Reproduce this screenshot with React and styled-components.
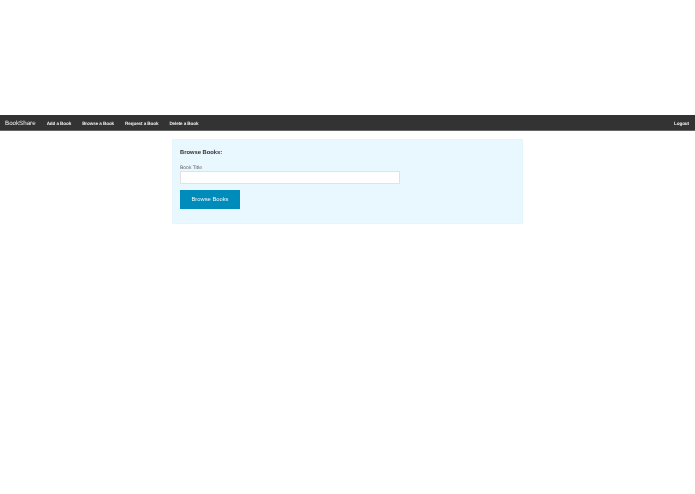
import React from 'react'
import styled, { createGlobalStyle } from 'styled-components'

const GlobalStyle = createGlobalStyle`
  html, body {
    margin: 0;
    padding: 0;
    background: #fff;
    font-family: "Liberation Sans", Arial, sans-serif;
    text-rendering: geometricPrecision;
  }
`

const Page = styled.div`
  min-height: 494px;
  padding-top: 115px;
  box-sizing: border-box;
  filter: blur(0.35px);
`

const TopBar = styled.nav`
  height: 14px;
  background: #333;
  border-bottom: 1px solid #666;
  display: flex;
  align-items: center;
  justify-content: space-between;
  padding: 1px 6px 0 5px;
`

const NavLeft = styled.div`
  display: flex;
  align-items: center;
`

const Brand = styled.a`
  color: #f2f2f2;
  font-size: 6.2px;
  margin-right: 11px;
  white-space: nowrap;
`

const NavLink = styled.a`
  color: #eee;
  font-size: 4.6px;
  font-weight: 700;
  letter-spacing: -0.1px;
  margin-right: ${(p) => (p.$last ? 0 : '11px')};
  white-space: nowrap;
`

const Panel = styled.section`
  width: 351px;
  height: 85px;
  box-sizing: border-box;
  margin: 8px auto 0;
  padding: 9px 7px 0;
  background: #e9f7fe;
  border: 1px solid #e6f4fb;
`

const Heading = styled.h4`
  margin: 0 0 8px;
  font-size: 5.8px;
  line-height: 8px;
  font-weight: 700;
  color: #333;
`

const Label = styled.label`
  display: block;
  font-size: 5px;
  line-height: 6px;
  color: #666;
`

const TextInput = styled.input`
  display: block;
  width: 220px;
  height: 13px;
  box-sizing: border-box;
  margin: 0 0 6px;
  padding: 0;
  background: #fff;
  border: 1px solid #e2e2e2;
`

const Button = styled.button`
  display: block;
  width: 60px;
  height: 19px;
  padding: 0 0 2px;
  border: 0;
  background: #008cba;
  color: #eef8fb;
  font-family: inherit;
  font-size: 5.8px;
`

const links = ['Add a Book', 'Browse a Book', 'Request a Book', 'Delete a Book']

export default function App() {
  return (
    <Page>
      <GlobalStyle />
      <TopBar>
        <NavLeft>
          <Brand>BookShare</Brand>
          {links.map((link) => (
            <NavLink key={link}>{link}</NavLink>
          ))}
        </NavLeft>
        <NavLink $last>Logout</NavLink>
      </TopBar>
      <Panel>
        <Heading>Browse Books:</Heading>
        <Label>Book Title</Label>
        <TextInput type="text" />
        <Button>Browse Books</Button>
      </Panel>
    </Page>
  )
}
